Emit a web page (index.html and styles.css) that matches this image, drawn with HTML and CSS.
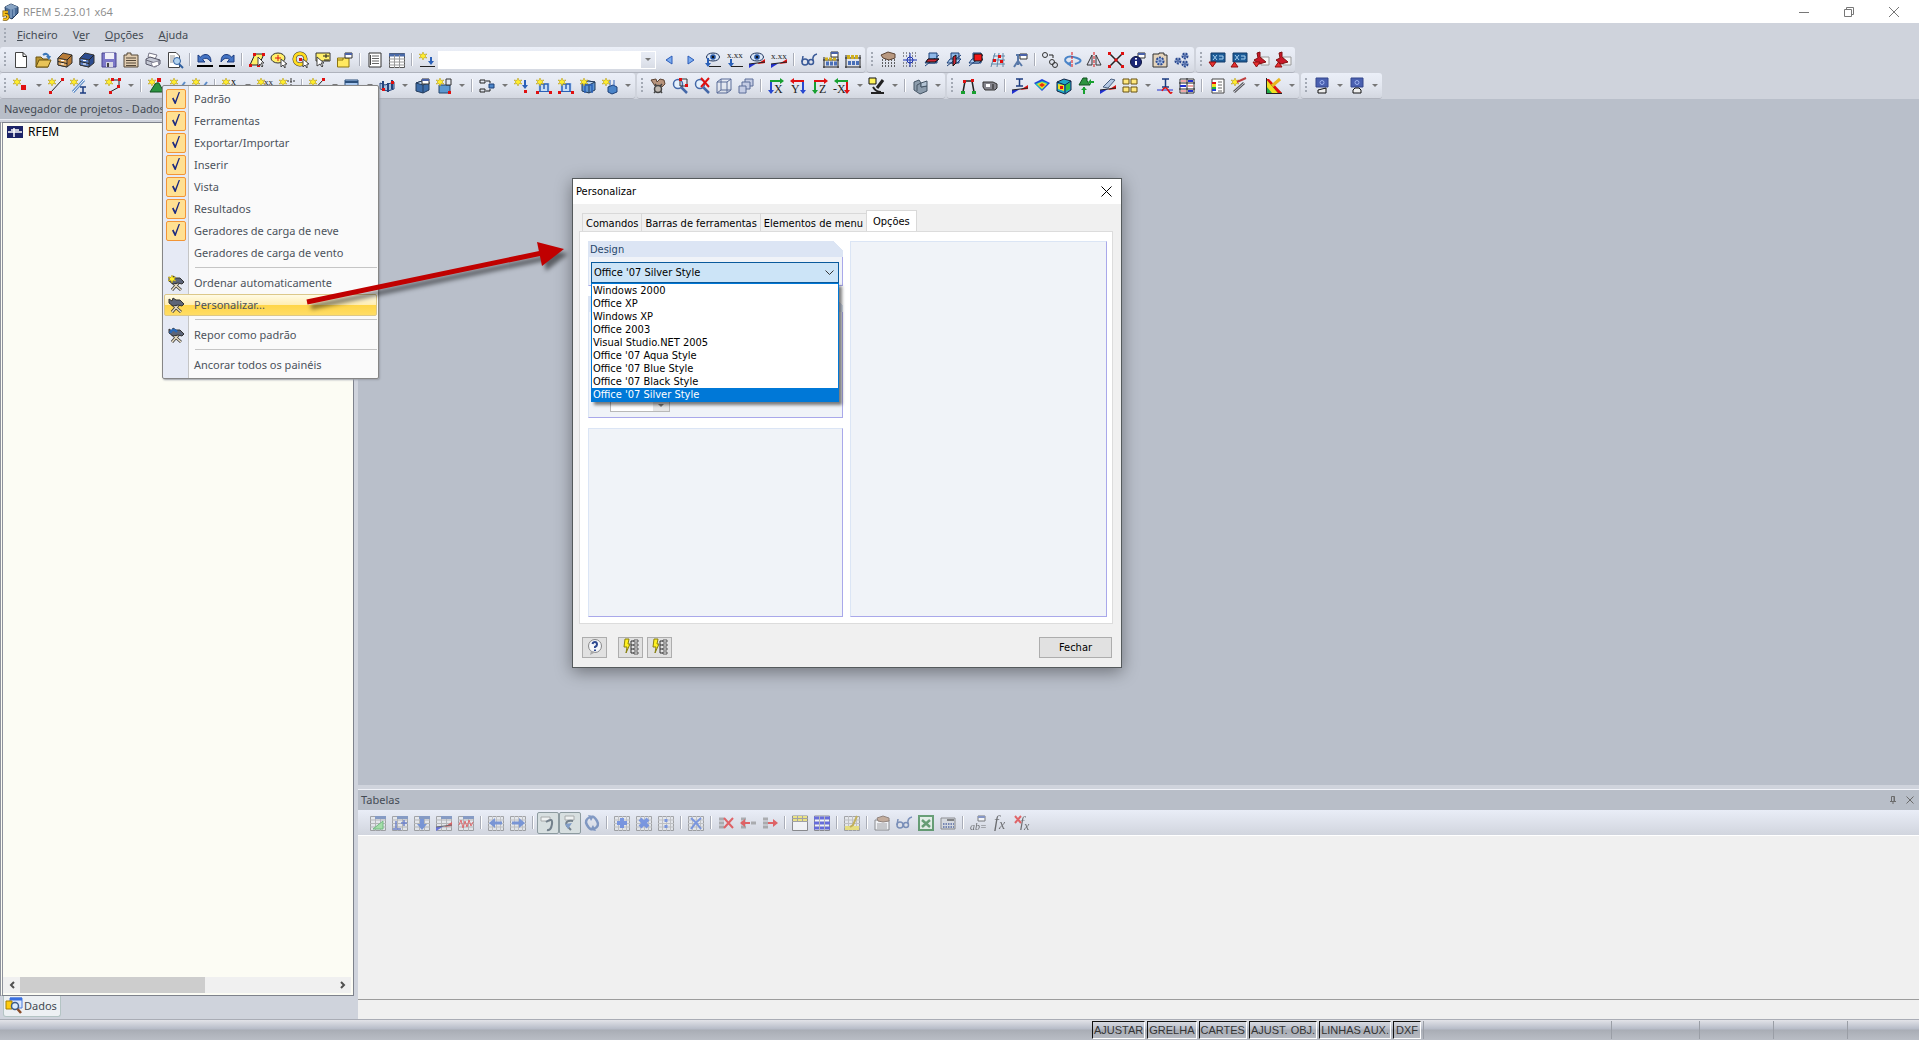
FILE: index.html
```html
<!DOCTYPE html>
<html lang="pt">
<head>
    <meta charset="UTF-8">
    <meta name="viewport" content="width=device-width, initial-scale=1.0">
    <title>RFEM 5.23.01 x64</title>
    <link rel="stylesheet" href="styles.css">
</head>
<body>
    <header class="titlebar">
        <span class="logo" data-icon="logo"></span>
        <h1>RFEM 5.23.01 x64</h1>
        <button class="win_btn" aria-label="Minimizar"><svg viewBox="0 0 10 10"><path d="M0 5.5H10"/></svg></button>
        <button class="win_btn" aria-label="Restaurar"><svg viewBox="0 0 10 10"><path d="M.5 2.500H7.500V9.500H.5ZM2.500 2.500V.5H9.500V7.500H7.500"/></svg></button>
        <button class="win_btn" aria-label="Fechar janela"><svg viewBox="0 0 10 10"><path d="M0 0L10 10M10 0L0 10"/></svg></button>
    </header>
    <nav class="menubar">
        <i class="grip"></i>
        <a href="#"><u>F</u>icheiro</a>
        <a href="#">V<u>e</u>r</a>
        <a href="#"><u>O</u>pções</a>
        <a href="#"><u>A</u>juda</a>
    </nav>
    <div class="bars" id="row1"></div>
    <div class="bars" id="row2"></div>

    <main class="main">
        <aside class="nav">
            <h2 class="caption">Navegador de projetos - Dados</h2>
            <div class="tree">
                <ul>
                    <li><span data-icon="root"></span>RFEM</li>
                </ul>
                <div class="scroll">
                    <button aria-label="Esquerda"><svg viewBox="0 0 8 8"><path d="M6 1L3 4L6 7"/></svg></button>
                    <div class="track"><div class="thumb"></div></div>
                    <button aria-label="Direita"><svg viewBox="0 0 8 8"><path d="M2 1L5 4L2 7"/></svg></button>
                </div>
            </div>
            <div class="nav_tabs">
                <button class="nav_tab"><span data-icon="data"></span>Dados</button>
            </div>
        </aside>
        <div class="work">
            <div class="canvas"></div>
            <section class="tables">
                <div class="tables_head">
                    <h2 class="caption">Tabelas</h2>
                    <button aria-label="Fixar"><svg viewBox="0 0 8 8"><path d="M1 5.500H7M2.500 5V.5H5.500V5M5 .5V5M4 6V8"/></svg></button>
                    <button aria-label="Fechar painel"><svg viewBox="0 0 8 8"><path d="M.5 .5L7.500 7.500M7.500 .5L.5 7.500"/></svg></button>
                </div>
                <div class="tables_bar" id="row3"></div>
                <div class="tables_body"></div>
                <div class="tables_foot"></div>
            </section>
        </div>
    </main>

    <footer class="status">
        <button>AJUSTAR</button>
        <button>GRELHA</button>
        <button>CARTES</button>
        <button>AJUST. OBJ.</button>
        <button>LINHAS AUX.</button>
        <button>DXF</button>
        <i class="cell cell_wide"></i>
        <i class="cell cell_mid"></i>
        <i class="cell"></i>
        <i class="cell"></i>
        <i class="cell"></i>
    </footer>

    <div class="context">
        <label><input type="checkbox" checked>Padrão</label>
        <label><input type="checkbox" checked>Ferramentas</label>
        <label><input type="checkbox" checked>Exportar/Importar</label>
        <label><input type="checkbox" checked>Inserir</label>
        <label><input type="checkbox" checked>Vista</label>
        <label><input type="checkbox" checked>Resultados</label>
        <label><input type="checkbox" checked>Geradores de carga de neve</label>
        <label><input type="checkbox">Geradores de carga de vento</label>
        <hr>
        <button><span data-icon="toolsNew"></span>Ordenar automaticamente</button>
        <button class="active"><span data-icon="tools"></span>Personalizar...</button>
        <hr>
        <button><span data-icon="toolsReset"></span>Repor como padrão</button>
        <hr>
        <button><span></span>Ancorar todos os painéis</button>
    </div>

    <div class="dialog" role="dialog" aria-labelledby="dlg_title">
        <div class="dialog_title">
            <h2 id="dlg_title">Personalizar</h2>
            <button aria-label="Fechar diálogo"><svg viewBox="0 0 11 11"><path d="M.5 .5L10.500 10.500M10.500 .5L.5 10.500"/></svg></button>
        </div>
        <div class="tabs">
            <button>Comandos</button>
            <button>Barras de ferramentas</button>
            <button>Elementos de menu</button>
            <button class="current">Opções</button>
        </div>
        <div class="page">
            <div class="column">
                <div class="group group_design">
                    <label class="group_head" for="design">Design</label>
                    <div class="combo">
                        <select id="design">
                            <option>Office '07 Silver Style</option>
                        </select>
                        <svg class="chevron" viewBox="0 0 9 6"><path d="M.5 .5L4.500 4.500L8.500 .5"/></svg>
                        <select class="list" size="9" aria-label="Estilos">
                            <option>Windows 2000</option>
                            <option>Office XP</option>
                            <option>Windows XP</option>
                            <option>Office 2003</option>
                            <option>Visual Studio.NET 2005</option>
                            <option>Office '07 Aqua Style</option>
                            <option>Office '07 Blue Style</option>
                            <option>Office '07 Black Style</option>
                            <option selected>Office '07 Silver Style</option>
                        </select>
                    </div>
                </div>
                <div class="group group_size">
                    <div class="group_head"></div>
                    <div class="spin">
                        <input type="text" aria-label="Tamanho">
                        <button aria-label="Diminuir"></button>
                    </div>
                </div>
                <div class="group group_fill"></div>
            </div>
            <div class="group"></div>
        </div>
        <div class="dialog_foot">
            <button class="tool" aria-label="Ajuda" data-icon="help"></button>
            <button class="tool tool_gap" aria-label="Expandir" data-icon="flash"></button>
            <button class="tool" aria-label="Recolher" data-icon="flash"></button>
            <button class="close">Fechar</button>
        </div>
    </div>

    <svg class="arrow" viewBox="0 0 272 76">
        <path d="M7 62L242 13" stroke="#c00000" stroke-width="5"/>
        <path d="M237 2L264 9L242 26Z" fill="#c00000"/>
    </svg>
    <script src="script.js"></script>
</body>
</html>
```

FILE: styles.css
```css
*{
    box-sizing: border-box;
    margin: 0;
    padding: 0;
}
body{
    position: relative;
    display: flex;
    flex-direction: column;
    height: 100vh;
    overflow: hidden;
    background-color: #cfd3dc;
    font: 11px/16px "Noto Sans", sans-serif;
    color: #444b54;
}
button{
    border: none;
    background: none;
    color: inherit;
    font: inherit;
}
svg{
    display: block;
    flex: none;
    overflow: visible;
    fill: none;
}
h1, h2{
    font-size: inherit;
    font-weight: normal;
}
ul{
    list-style: none;
}

/* title and menu */
.titlebar{
    display: flex;
    align-items: center;
    height: 23px;
    padding: 0 3px 0 2px;
    background-color: white;
}
.titlebar h1{
    flex: 1;
    padding-left: 5px;
    font: 11px/16px "Open Sans", sans-serif;
    color: #8c8c8c;
}
.win_btn{
    display: grid;
    place-items: center;
    width: 45px;
    height: 20px;
}
.win_btn svg{
    width: 10px;
    height: 10px;
    stroke: #777;
}
.menubar{
    display: flex;
    align-items: center;
    gap: 15px;
    height: 24px;
}
.menubar .grip{
    margin-right: -8px;
}
.menubar a{
    color: inherit;
    text-decoration: none;
}

/* toolbars */
.bars{
    display: flex;
    gap: 2px;
    height: 26px;
}
.bar{
    display: flex;
    align-items: center;
    height: 26px;
    padding-right: 1px;
    border-bottom: 1px solid #afb3bd;
    border-radius: 3px;
    background: linear-gradient(#ebeff8, #e3e7f0 50%, #d3d7e0);
}
.grip{
    width: 10px;
    height: 15px;
    flex: none;
    background: repeating-linear-gradient(#a3a9b4 0 2px, transparent 2px 4px) 4px 0/2px 15px no-repeat;
}
.sep{
    width: 8px;
    height: 13px;
    flex: none;
    background: linear-gradient(90deg, #a9adb8 1px, white 1px) 3px 0/2px 13px no-repeat;
}
.icon{
    display: grid;
    place-items: center;
    flex: none;
    width: 22px;
    height: 22px;
}
.icon svg, [data-icon] svg{
    width: 16px;
    height: 16px;
}
.drop{
    display: grid;
    place-items: center;
    flex: none;
    width: 13px;
    height: 22px;
}
.drop::before, .combo_btn::before, .spin button::before{
    content: "";
    border: 3px solid transparent;
    border-top-color: #777;
    border-bottom: none;
}
.finder{
    display: flex;
    width: 218px;
    height: 18px;
    margin-right: 2px;
    border: 1px solid white;
}
.finder input{
    flex: 1;
    min-width: 0;
    border: none;
    background-color: white;
}
.combo_btn{
    display: grid;
    place-items: center;
    width: 14px;
}

/* navigator */
.main{
    display: flex;
    flex: 1;
    min-height: 0;
}
.nav{
    display: flex;
    flex-direction: column;
    width: 358px;
    padding-right: 4px;
}
.caption{
    flex: 1;
    font: 11px/20px "Noto Sans", sans-serif;
}
.nav .caption{
    flex: none;
    height: 21px;
    padding-left: 4px;
    border-bottom: 1px solid #e8ebf2;
    background-color: #b8bec8;
}
.tree{
    display: flex;
    flex: 1;
    flex-direction: column;
    justify-content: space-between;
    margin-top: 2px;
    padding: 1px 2px 2px 0;
    border: 1px solid #7e828c;
    border-left: 3px double #8e929c;
    background-color: #fcfcf4;
}
.tree li{
    display: flex;
    align-items: center;
    gap: 5px;
    padding: 0 4px;
    font-size: 12px;
    color: black;
}
.scroll{
    display: flex;
    height: 16px;
    background-color: #f0f0f0;
}
.scroll button{
    display: grid;
    place-items: center;
    width: 17px;
}
.scroll svg{
    width: 8px;
    height: 8px;
    stroke: #505050;
    stroke-width: 2;
}
.track{
    flex: 1;
}
.thumb{
    width: 59%;
    height: 100%;
    background-color: #cdcdcd;
}
.nav_tabs{
    height: 23px;
    padding-left: 3px;
}
.nav_tab{
    display: flex;
    align-items: center;
    gap: 2px;
    height: 21px;
    padding: 0 3px 0 2px;
    border: 1px solid #b4c4c4;
    border-top: none;
    border-radius: 0 0 3px 3px;
    background-color: #edf0f3;
}

/* work area and tables */
.work{
    display: flex;
    flex: 1;
    flex-direction: column;
    min-width: 0;
}
.canvas{
    flex: 1;
    background-color: #b9bfca;
}
.tables{
    display: flex;
    flex-direction: column;
    height: 230px;
    margin-top: 4px;
    border-top: 1px solid #f0f2f8;
}
.tables_head{
    display: flex;
    align-items: center;
    gap: 1px;
    height: 20px;
    padding: 0 1px 0 3px;
    background-color: #b8bec8;
}
.tables_head button{
    display: grid;
    place-items: center;
    width: 16px;
    height: 16px;
}
.tables_head svg{
    width: 8px;
    height: 8px;
    stroke: #6c6c6c;
}
.tables_bar{
    display: flex;
    align-items: center;
    height: 25px;
    padding-left: 9px;
    background: linear-gradient(#e9edf7, #d1d5de);
}
.tables_bar svg{
    opacity: .6;
}
.icon.on{
    border: 1px solid #8d9ba0;
    border-radius: 2px;
    background-color: #d7dfe0;
}
.tables_body{
    flex: 1;
    border-top: 1px solid white;
    border-bottom: 1px solid #9c9c9c;
    background-color: #f0f0f0;
}
.tables_foot{
    height: 19px;
    background-color: #f0f0f0;
}

/* status bar */
.status{
    display: flex;
    justify-content: flex-end;
    gap: 2px;
    height: 21px;
    padding: 1px 0;
    border-top: 1px solid #a9acb5;
    background: linear-gradient(#e2e3e8, #b6bbc8 9px, #a9adb5 10px, #b9bdc5);
}
.status button{
    min-width: 28px;
    padding: 0 1px;
    border: 1px solid;
    border-color: #111 white white #111;
    font: 11px/16px "Liberation Sans", sans-serif;
    color: #333;
}
.cell{
    width: 72px;
    border-left: 1px solid #9a9ea6;
}
.cell_mid{
    width: 86px;
}
.cell_wide{
    width: 186px;
}

/* menu of the toolbars */
.context{
    position: absolute;
    left: 162px;
    top: 85px;
    width: 217px;
    padding: 2px 1px;
    border: 1px solid #868686;
    border-radius: 2px;
    background: linear-gradient(90deg, #e6eaf5 25px, #c5c5c5 25px 26px, #fafafa 26px);
    box-shadow: 1px 1px 2px #9a9ea6;
    color: #4c535c;
}
.context label, .context button{
    display: grid;
    grid-template-columns: 20px 1fr;
    align-items: center;
    gap: 8px;
    width: 100%;
    height: 22px;
    padding-left: 2px;
    text-align: left;
}
.context input{
    appearance: none;
    width: 20px;
    height: 20px;
}
.context input:checked{
    border: 1px solid #f29536;
    border-radius: 2px;
    background-color: #ffe092;
}
.context input:checked::before{
    content: "";
    display: block;
    width: 8px;
    height: 12px;
    margin: 2px 5px;
    background-color: #1c2a80;
    clip-path: polygon(0 54%, 18% 46%, 40% 74%, 84% 0, 100% 0, 46% 100%, 34% 100%);
}
.context hr{
    height: 8px;
    margin-left: 31px;
    border: none;
    background: linear-gradient(#c5c5c5, #c5c5c5) 0 3px/100% 1px no-repeat;
}
.context [data-icon]{
    padding-left: 2px;
}
.context .active{
    border: 1px solid #dcc88a;
    border-radius: 2px;
    padding-left: 1px;
    background: linear-gradient(#fffbe6, #ffeeb4 48%, #ffd548 50%, #ffdd66);
}

/* dialog */
.dialog{
    position: absolute;
    left: 572px;
    top: 178px;
    display: flex;
    flex-direction: column;
    width: 550px;
    height: 490px;
    border: 1px solid #555a5c;
    background-color: #f0f0f0;
    box-shadow: 0 4px 16px rgba(0, 0, 0, .4);
    font: 11px/13px "DejaVu Sans Condensed", "Liberation Sans", sans-serif;
    color: black;
}
.dialog_title{
    display: flex;
    justify-content: space-between;
    align-items: center;
    height: 25px;
    padding: 0 9px 0 3px;
    background-color: white;
}
.dialog_title svg{
    width: 11px;
    height: 11px;
    stroke: black;
}
.tabs{
    display: flex;
    align-items: flex-end;
    height: 27px;
    padding-left: 9px;
}
.tabs button{
    height: 18px;
    padding: 1px 3px 0;
    border: 1px solid #d9d9d9;
    border-right: none;
    border-bottom: none;
}
.tabs .current{
    height: 21px;
    padding: 0 6px;
    border-right: 1px solid #d9d9d9;
    background-color: white;
    box-shadow: 0 1px white;
}
.page{
    display: grid;
    grid-template-columns: 255px 1fr;
    gap: 7px;
    flex: 1;
    margin: 0 8px 0 6px;
    padding: 9px 5px 6px 8px;
    border: 1px solid #dcdcdc;
    background-color: white;
}
.column{
    display: flex;
    flex-direction: column;
    gap: 10px;
}
.group{
    border: 1px solid #dbe5f5;
    border-right-color: #a9a8ea;
    border-bottom-color: #a9a8ea;
    background-color: #f0f3f8;
}
.group_head{
    display: block;
    height: 16px;
    margin: -1px;
    padding: 2px;
    background: linear-gradient(225deg, white 7px, #dce5f4 7px);
    color: #27476b;
}
.group_design{
    height: 45px;
}
.group_size{
    height: 122px;
}
.group_fill{
    flex: 1;
}
.combo{
    position: relative;
    margin: 6px 3px 0 2px;
}
.combo select{
    appearance: none;
    display: block;
    width: 100%;
    border-radius: 0;
    outline: none;
    font: inherit;
    color: black;
}
#design{
    height: 21px;
    padding-left: 2px;
    border: 1px solid #0a5a9c;
    background-color: #cce4f7;
}
.chevron{
    position: absolute;
    right: 5px;
    top: 8px;
    width: 9px;
    height: 6px;
    stroke: #333;
}
.combo .list{
    position: absolute;
    top: 21px;
    left: 0;
    z-index: 1;
    height: 119px;
    overflow: hidden;
    border: 1px solid #0078d7;
    background-color: white;
    box-shadow: 3px 3px 3px rgba(0, 0, 0, .5);
}
.list option{
    min-height: 13px;
    height: 13px;
    padding: 0 1px;
    line-height: 13px;
}
.list option:checked{
    background: linear-gradient(#0078d7, #0078d7);
    color: white;
    -webkit-text-fill-color: white;
}
.spin{
    display: flex;
    width: 60px;
    height: 20px;
    margin: 81px 0 0 21px;
    border: 1px solid #b9b9b9;
}
.spin input{
    width: 42px;
    border: none;
    background-color: white;
}
.spin button{
    display: grid;
    place-items: center;
    flex: 1;
    padding-top: 6px;
    background-color: #e6e6e6;
}
.dialog_foot{
    display: flex;
    align-items: center;
    gap: 4px;
    height: 43px;
    padding: 3px 9px 0;
}
.dialog_foot button{
    height: 21px;
    border: 1px solid #adadad;
    background-color: #e1e1e1;
}
.tool{
    display: grid;
    place-items: center;
    width: 25px;
}
.tool_gap{
    margin-left: 7px;
}
.dialog_foot .close{
    width: 73px;
    margin-left: auto;
}

/* pointer from the menu to the dialog */
.arrow{
    position: absolute;
    left: 300px;
    top: 240px;
    width: 272px;
    height: 76px;
    pointer-events: none;
    filter: drop-shadow(4px 5px 2px rgba(0, 0, 0, .5));
}
```

FILE: script.js
```js
//pieces shared by many icons
const star = '<path d="M4 0L5 2.500L8 2L6 4L8 6L5 5.500L4 8L3 5.500L0 6L2 4L0 2L3 2.500Z" fill="#ffee2a" stroke="#b8a020" stroke-width=".6"/>'
const dot = (x, y) => `<rect x="${x}" y="${y}" width="3" height="3" fill="#e01010"/>`
const line = (d, color = '#222', width = 1) => `<path d="${d}" stroke="${color}" stroke-width="${width}"/>`
const fill = (d, color, edge = 'none') => `<path d="${d}" fill="${color}" stroke="${edge}"/>`
const text = (x, y, value, size = 10, color = '#222') => `<text x="${x}" y="${y}" font-family="Liberation Serif, serif" font-size="${size}" fill="${color}">${value}</text>`
const win = (x, y) => `<path d="M${x} ${y}h7v5h-7z" fill="#fff" stroke="#333"/><path d="M${x} ${y + 1}h7" stroke="#4a62a8" stroke-width="2"/>`
const wedge = fill('M0 16V12L8 11Z', '#2030d0') + fill('M16 7V11L8 12Z', '#e01010') + line('M0 12L16 10')
const grid = fill('M.5 1.500H15.500V15.500H.5Z', '#e8eaec', '#777') + line('M0 5H16M0 8.500H16M0 12H16M5.500 1V16M10.500 1V16', '#999') + fill('M5 1H16V4H5Z', '#4a6aa8')
const plain = fill('M.5 1.500H15.500V15.500H.5Z', '#e8eaec', '#777') + line('M0 5H16M0 8.500H16M0 12H16M4.500 1V16M8.500 1V16M12.500 1V16', '#aaa')
const cube = (c) => fill('M2 5L8 3L15 4V12L9 15L2 13Z', c, '#223a5a') + fill('M2 5L8 3L15 4L9 7Z', '#bcd4f0', '#223a5a') + line('M9 7V15', '#223a5a')
const planes = (r) => fill('M5 1H13V11H5Z', '#8fb8e8', '#1c4078') + fill('M4 7H15L11 11H1Z', '#a8c8f0', '#1c4078') + line('M1 14L15 3', '#1c4078') + r
const glasses = '<g stroke="#3a5a98" stroke-width="1.500"><circle cx="4" cy="10" r="3"/><circle cx="10" cy="10" r="2.500"/><path d="M1 10L2 4M7 10H8M12 9Q11 3 16 2"/></g>'
const hammer = line('M4 7L13 15M12 6L4 15', '#333', 3) + line('M4 7L13 15M12 6L4 15', '#e8dcc0', 1.500) + fill('M1 2L4 4L5 1L8 3L12 3L16 7L14 9L10 8L5 9L1 6Z', '#5c6478', '#333')
const disk = fill('M1 1H15V15H1Z', '#7c78c8', '#4a4690') + fill('M4 1H13V7H4Z', '#f0f0f8') + fill('M5 10H12V15H5Z', '#d8d8e4') + fill('M6 11H8V15H6Z', '#444')
const lens = '<circle cx="6" cy="6" r="4.500" fill="#e4f0fc" stroke="#4468a8" stroke-width="1.500"/><path d="M9.500 9.500L15 15" stroke="#4468a8" stroke-width="2.500"/>'
const eye = '<ellipse cx="8" cy="5" rx="6.500" ry="4" fill="#dce8f8" stroke="#1c3058"/><circle cx="8" cy="5" r="2.800" fill="#2858a8"/><circle cx="8" cy="5" r="1.200"  fill="#111"/>'
const cabinet = (c, d) => fill('M1 6L6 1L15 3V11L10 15L1 13Z', c, '#333') + fill('M1 6L10 8V15L1 13Z', d, '#333') + line('M1 9.500L10 11.500M10 8L15 3') + line('M4 8.500H7M4 12H7', '#fff')
const loads = fill('M2 5H14V13H2Z', '#c8dcf4') + line('M4 14V6H12V14M8 6V11', '#2a60b8', 1.500) + line('M1 13.500H15', '#2a60b8') + dot(0, 13) + dot(13, 13)
const axes = (a, b, t, x) => line('M3 15V3H13', a, 2) + line('M3 15V4', b, 2) + fill('M12 0L16 3L12 6Z', a) + fill('M0 12H6L3 16Z', b) + text(x, 15, t, 12)
const backAxes = (a, b, t, x) => line('M13 15V3H4', a, 2) + line('M13 15V4', b, 2) + fill('M4 0L0 3L4 6Z', a) + fill('M10 12H16L13 16Z', b) + text(x, 15, t, 12)
const gear = (x, y, r) => `<circle cx="${x}" cy="${y}" r="${r}" fill="#a8c0e8" stroke="#2c4a90" stroke-width="2" stroke-dasharray="2 1"/><circle cx="${x}" cy="${y}" r="1" fill="#fff" stroke="#2c4a90"/>`
const monitor = fill('M2 1H16V10H2Z', '#1c5c98', '#123a68') + line('M4 3L8 8M8 3L4 8M10 4H14V7H10', '#a8d0f0')
const person = fill('M8 5H16V13H8Z', '#f4f4f4', '#999') + fill('M4 1L7 0V5L13 10L6 12L1 8L5 6Z', '#c81828', '#801010')
const screen = fill('M2 0H14V9H2Z', '#4a60b0', '#34478c') + '<circle cx="8" cy="4.500" r="2" stroke="#a0b4f0"/>'
const rows = line('M1 4H6M1 8H6M1 12H6', '#888', 3)

const icons = {
    logo: fill('M3 3L9 0L16 3V9L10 15L4 12Z', '#4a6c98', '#223a5a') + fill('M3 3L9 0L16 3L9 6Z', '#88a4c4') + line('M9 6V14M12 5V12', '#a0bcdc') + '<path d="M6 8H2V11Q6 10 6 13T1 15" stroke="#7c5800" stroke-width="3"/><path d="M6 8H2V11Q6 10 6 13T1 15" stroke="#ffc820" stroke-width="1.500"/>',
    root: fill('M0 2H16V14H0Z', '#1c2468') + line('M1 8H15M7 4V13M4 6L12 6', '#fff', 1.500),
    data: fill('M4 0H16V10H4Z', '#dce8fc', '#4a7ce0') + line('M4 1H16', '#3a70e0', 3) + fill('M0 3H6V11H0Z', '#ffcc10', '#a88000') + '<circle cx="9" cy="8" r="3.500" fill="#dcecfc" stroke="#3c5c88" stroke-width="1.500"/><path d="M11.500 11L15 15" stroke="#8a4c28" stroke-width="2.500"/>',
    newFile: fill('M2.500 .5H10L13.500 4V15.500H2.500Z', '#fff', '#444') + line('M10 .5V4.500H13.500'),
    open: fill('M1 5H6L8 7H13V15H1Z', '#b89430', '#6c5410') + fill('M1 15L4 8H16L13 15Z', '#e8c458', '#6c5410') + line('M8 3Q12 0 14 5', '#3c78b8', 2) + fill('M11 4H16L14 8Z', '#3c78b8'),
    cabinet: cabinet('#b87c38', '#e0a860'),
    cabinetBlue: cabinet('#2c4c90', '#5c80c4'),
    save: disk,
    report: fill('M1 3H4V1H8V3H15V15H1Z', '#e0ccb0', '#554838') + line('M3 6H13M3 8.500H13M3 11H13M3 13.500H13', '#554838'),
    print: fill('M4 1L12 3L10 7L3 5Z', '#fff', '#778') + fill('M1 7L5 5L15 8V12L10 15L1 12Z', '#c4c8d4', '#556') + line('M1 8L10 11L15 8', '#667') + fill('M6 11L13 9L14 13L8 15Z', '#fff', '#889'),
    preview: fill('M1.500 .5H9L12.500 4V15.500H1.500Z', '#fff', '#444') + line('M3 4H8M3 6H8M3 8H6M3 10H6', '#999') + '<circle cx="10" cy="9" r="3.500" fill="#b4d4f0" stroke="#3060a0"/><path d="M12 12L16 16" stroke="#3060a0" stroke-width="2"/>',
    undo: fill('M1 3V10H8L5.500 7.500Q10 4 14 10Q14 2 8 2.500Q5 3 3.500 5Z', '#4474c4', '#1c3c80') + line('M0 14H16', '#000', 2),
    redo: '<g transform="translate(16 0) scale(-1 1)">' + fill('M1 3V10H8L5.500 7.500Q10 4 14 10Q14 2 8 2.500Q5 3 3.500 5Z', '#4474c4', '#1c3c80') + '</g>' + line('M0 14H16', '#000', 2),
    selPlane: fill('M6 2H15L10 13H1Z', '#fff06a', '#222') + dot(4, 1) + dot(13, 1) + dot(0, 12) + dot(8, 12) + fill('M9 5V14L11 12L13 15L14 14L12 11H15Z', '#fff', '#444'),
    selEllipse: '<ellipse cx="7" cy="6" rx="7" ry="5" fill="#fff06a" stroke="#333"/>' + line('M7 3V9M4 6H10', '#e01010') + fill('M10 7V15L12 13L14 16L14 12H16Z', '#fff', '#444'),
    selRing: '<circle cx="7" cy="7" r="5.500" stroke="#333" stroke-width="4"/><circle cx="7" cy="7" r="5.500" stroke="#ffdc20" stroke-width="3"/>' + dot(6, 6) + fill('M10 7V15L12 13L14 16L14 12H16Z', '#fff', '#444'),
    selPlus: fill('M1 1H15V9H1Z', '#fff06a', '#333') + line('M8 4H14M11 2V6M9 8H14') + fill('M2 5V14L5 12L7 15L8 14L6 11H9Z', '#fff', '#444'),
    selWindow: fill('M.5 6H12V15H.5Z', '#ffe860', '#8c7410') + line('M0 8H6V6', '#8c7410') + win(8, 1),
    list: fill('M2 1H14V15H2Z', '#fff', '#333') + line('M5 4H12M5 6.500H12M5 9H12M5 11.500H12', '#666') + line('M3.500 3V13', '#444', 1),
    table: fill('M.5 1.500H15.500V15.500H.5Z', '#fff', '#555') + line('M0 3H16', '#4a6aa8', 3) + line('M0 7H16M0 10H16M0 13H16M5.500 3V16M10.500 3V16', '#999'),
    loadNew: star + line('M12 5V10', '#2a60b8', 2) + fill('M9 9H15L12 13Z', '#2a60b8') + line('M1 14.500H16'),
    prev: fill('M11 4V12L5 8Z', '#7cacf0', '#2c5cb8'),
    next: fill('M5 4V12L11 8Z', '#7cacf0', '#2c5cb8'),
    eyeLoad: eye + line('M3 6V13', '#2a60b8', 2) + fill('M0 11H6L3 15Z', '#2a60b8') + line('M4 14.500H16'),
    xLoad: text(0, 6, 'x.xx', 9) + line('M4 7V13', '#2a60b8', 2) + fill('M1 11H7L4 15Z', '#2a60b8') + line('M4 14.500H16'),
    eyeRes: eye + wedge,
    xRes: text(0, 7, 'x.xx', 9) + wedge,
    glasses: glasses,
    calcWin: line('M1 5V16M15 5V16M0 8H16M0 15H16', '#222') + '<path d="M2 7H14" stroke="#d0b020" stroke-width="3" stroke-dasharray="3 1"/><path d="M3 11.500H14" stroke="#4a70b8" stroke-width="4" stroke-dasharray="3 1"/>' + win(8, 0),
    calc: line('M1 3V16M15 3V16M0 6H16M0 15H16', '#222') + '<path d="M2 5H14" stroke="#d0b020" stroke-width="4" stroke-dasharray="3 1"/><path d="M3 11H14" stroke="#4a70b8" stroke-width="4" stroke-dasharray="3 1"/>',
    gridHand: '<path d="M2 8H16M2 11H16M2 14H16" stroke="#333" stroke-width="1.500" stroke-dasharray="1 2"/>' + fill('M1 3L8 0L15 2V6L9 8L3 6Z', '#b89880', '#5c4434'),
    gridSnap: '<path d="M1 1H16M1 4H16M1 11H16M1 14H16" stroke="#333" stroke-dasharray="1 2"/><circle cx="8" cy="8" r="3" stroke="#1830b0"/>' + line('M8 1V15M1 8H15', '#1830b0'),
    plane1: planes(fill('M4 7H15L11 10H2Z', '#d02838', '#111') + fill('M6 2H12V6H6Z', '#8fb8e8')),
    plane2: planes(fill('M7 5L10 3V11L7 14Z', '#d02838', '#111')),
    plane3: planes(fill('M6 2H14V9H6Z', '#f01818', '#111')),
    gridLines: line('M5 1L1 15M9 1L7 15M13 1L13 15M3 4H15M2 8H15M1 12H15', '#6088a8') + dot(3, 7) + dot(8, 3) + dot(10, 8),
    cutWin: line('M4 3H8M6 3V13M2 15L6 9L10 14', '#5878a8', 2) + win(8, 2),
    copy: '<circle cx="3" cy="3" r="2.500" stroke="#333"/><circle cx="10" cy="10" r="2.500" stroke="#333"/><circle cx="13" cy="13" r="2.500" stroke="#333"/>' + line('M7 3H11V6'),
    rotate: '<path d="M5 12Q-1 9 2 6T13 6T11 12" stroke="#4a84c8" stroke-width="2"/>' + fill('M7 9V15L3 12Z', '#4a84c8') + '<path d="M8 0V16" stroke="#e01010" stroke-dasharray="3 1"/>',
    mirror: fill('M6 3V13H1Z', '#dde', '#333') + fill('M10 3V13H15Z', '#dde', '#333') + '<path d="M8 0V16" stroke="#e01010" stroke-dasharray="3 1"/>',
    cross: line('M2 2L14 14M14 2L2 14', '#222', 1.500) + dot(0, 0) + dot(13, 0) + dot(0, 13) + dot(13, 13) + dot(6.500, 6.500),
    info: win(8, 1) + '<circle cx="6" cy="10" r="5.500" fill="#1c2878" stroke="#0c1440"/><path d="M6 9V13M6 6V7.500" stroke="#fff" stroke-width="2"/>',
    gearDoc: fill('M1 2H7V1H12V3H15V15H1Z', '#e4d4bc', '#333') + gear(8, 9, 3.5),
    gears: gear(4, 9, 2.5) + gear(11, 4, 2.5) + gear(11, 12, 2.5),
    monDown1: monitor + fill('M0 10H7L3.500 15Z', '#e83030', '#901010'),
    monUp1: monitor + fill('M0 15H7L3.500 10Z', '#e83030', '#901010'),
    pplDown: person + fill('M0 10H7L3.500 15Z', '#e83030', '#901010'),
    pplUp: person + fill('M0 15H7L3.500 10Z', '#e83030', '#901010'),
    node: star + fill('M8 7H13V12H8Z', '#e01010'),
    lineNew: star + line('M3 14L14 2') + dot(1, 13) + dot(13, 0),
    memberNew: star + line('M3 14L14 2', '#5c8cc8', 3) + line('M3 14L14 2', '#fff') + line('M10 9H16M13 9V15M10 15H16', '#1c3c80', 1.500),
    polyNew: star + line('M7 2H14V9L5 14', '#222') + dot(6, 0) + dot(13, 0) + dot(12, 7) + dot(4, 13),
    support: star + fill('M9 0H13V4H9Z', '#e01010') + fill('M7 6Q11 3 12 7L16 14H2Z', '#2c9440', '#125020'),
    hinge: star + line('M9 12L15 4', '#5c8cc8', 2),
    xNew: star + text(9, 7, 'x', 10, '#000') + line('M3 12H15', '#3c6cb0', 2),
    xxNew: star + text(7, 7, 'xx', 9) + line('M3 12H15', '#3c6cb0'),
    dashNew: star + '<path d="M8 3H16M3 8H16M12 0V15" stroke="#333" stroke-dasharray="2 1"/>',
    surface: fill('M1 2H14V14H1Z', '#a8c8f0', '#2c507c') + line('M1 4H14', '#2c507c', 2),
    surfaces: fill('M1 5L6 7L15 4V11L9 13L1 11Z', '#a8c0e0', '#24447c') + line('M4 3V12M9 5V14M13 2V11', '#24447c', 2) + dot(3, 10) + dot(12, 3),
    solid: cube('#3c6ca8') + win(8, 1),
    solidNew: fill('M3 7H14V15H3Z', '#5c98d0', '#24446c') + star + fill('M10 1H15V7H10Z', '#e4e8f0', '#333') + dot(12, 13),
    connect: line('M1 2H6V5H1ZM1 11H6V14H1ZM7 3H11V5M7 13H11V11') + fill('M10 6H15V10H10Z', '#4a84c8', '#1c4078'),
    nodeLoad: star + line('M11 2V9', '#2a60b8', 2) + fill('M8 7H14L11 11Z', '#2a60b8') + dot(10, 12),
    memberLoad: loads + star,
    surfLoad: loads + star,
    solidLoad: cube('#5c94d0') + line('M5 15V7H12V15', '#2a60b8', 1.5) + star,
    freeLoad: fill('M6 9L11 7L15 9V14L10 16L6 14Z', '#4a84c8', '#1c4078') + line('M8 2V8M12 2V8', '#2a60b8') + star,
    handTools: fill('M1 2L6 1L7 4L10 1L14 2L15 6L12 9L5 8Z', '#b8947c', '#5c4434') + line('M5 6L12 15M12 6L4 15', '#444', 1.5) + '<circle cx="8" cy="11" r="3.500" fill="#c0b8b0" stroke="#444" stroke-width="1.500"/>',
    zoomWin: lens + line('M8 1H15V8H8Z', '#333') + dot(7, 0) + dot(13, 6),
    zoomOut: lens + line('M7 0L15 9M15 0L7 9', '#e01010', 2),
    wire: line('M1 4H11V15H1ZM5 1H15V12M1 4L5 1M11 4L15 1M11 15L15 12M5 1V12H15M1 15L5 12', '#5a6c98'),
    boxes: fill('M7 1H15V8H7Z', '#c4cce4', '#5a6c98') + fill('M4 4H12V11H4Z', '#c4cce4', '#5a6c98') + fill('M1 8H8V15H1Z', '#c4cce4', '#5a6c98'),
    axX: axes('#18a030', '#2848d0', 'X', 6),
    axY: backAxes('#e01010', '#2848d0', 'Y', 1),
    axZ: axes('#e01010', '#18a030', 'Z', 7),
    axMX: backAxes('#18a030', '#e01010', '-X', -1),
    scope: fill('M0 0H7V6H0Z', '#fff45a', '#111') + line('M8 10L14 2', '#222', 3) + line('M4 9Q7 14 12 14M2 15H15', '#222', 2),
    solids: fill('M2 4L7 2L9 5V9L15 8V13L8 16L2 12Z', '#8c9cac', '#445464') + fill('M9 5L15 3V8L9 9Z', '#b4c4d4', '#445464') + line('M5 7V13M5 7L9 5', '#445464'),
    frame: line('M3 14L5 3H12L14 14', '#222', 1.5) + dot(3, 2) + dot(11, 1) + '<path d="M1 13H5V16H1ZM12 13H16V16H12Z" fill="#18a030"/>',
    camera: fill('M1 4H11L15 6V10L13 12H3L1 9Z', '#84848c', '#333') + fill('M4 6H8V9H4Z', '#fff') + line('M11 6V11'),
    resMember: line('M4 1H11M7.500 1V8M4 8H11', '#1c3c80', 1.500) + wedge,
    resSurf: fill('M0 5L8 1L16 5L8 13Z', '#2040d8') + fill('M1 6L8 3L14 5L8 12Z', '#20c8b0') + fill('M3 6L8 4L13 6L8 11Z', '#f0e020') + fill('M5 7L8 5L11 7L8 9Z', '#e83010'),
    resSolid: fill('M1 4L8 1L15 3V12L9 16L1 13Z', '#20a8c8', '#124') + fill('M2 6L8 7V13L2 11Z', '#f0e020') + fill('M4 8H7V11H4Z', '#e01010') + fill('M10 7L14 5V11L10 13Z', '#30c040') + line('M9 7V15M1 4L9 7L15 3', '#124'),
    resSupp: fill('M5 0H9V3L12 7H1Z', '#2c9440', '#125020') + line('M6 9V16M11 4H16', '#18a030', 2) + fill('M3 12L6 9L9 12Z', '#18a030') + fill('M13 1V7L10 4Z', '#18a030'),
    section: fill('M3 9L11 1L15 2L8 10Z', '#b4c8e4', '#4a6080') + wedge,
    panels: fill('M1 1H7V6H1Z', '#ffe880', '#665010') + fill('M9 1H15V6H9Z', '#ffe880', '#665010') + fill('M1 9H7V14H1Z', '#ffe880', '#665010') + fill('M9 9H15V14H9Z', '#ffe880', '#665010'),
    wave: line('M5 1H12M8.500 1V9M5 9H12', '#1c3c80', 1.500) + line('M0 12H16', '#2030d0') + '<path d="M5 13Q8 7 11 12T15 14" stroke="#e01010" stroke-width="1.500"/>',
    waves: fill('M1 1H15V15H1Z', '#fff', '#333') + line('M0 5H16M0 11H16M8 0V16') + line('M1 8H7M9 3H14M9 13H14', '#2030d0', 2) + line('M2 3H7M9 8H14M2 13H7', '#e05050'),
    legend: fill('M3 1H15V15H3Z', '#fff', '#444') + line('M9 4H13M9 7H13M9 10H13M9 13H13', '#666') + fill('M3 4H7V6H3Z', '#e01010') + fill('M3 6H7V9H3Z', '#f0e020') + fill('M3 9H7V11H3Z', '#20b040') + fill('M3 11H7V13H3Z', '#2040d8'),
    brush: star + line('M3 14L13 5', '#555', 3) + line('M6 4L15 0', '#c04040', 2) + line('M3 14L13 5', '#ccd'),
    rainbow: fill('M0 1L16 15H0Z', '#20a848') + fill('M0 1L12 15H6L0 8Z', '#f0e020') + fill('M0 1H3L16 15H12Z', '#e01010') + line('M6 8L14 1', '#e8b820', 3) + line('M0 15.500H16M.5 0V16'),
    screenUp: screen + fill('M4 12L12 10V15H4Z', '#eee', '#111'),
    screenDown: screen + fill('M4 15V12L6 10H10L12 12V15Z', '#eee', '#111'),
    tEdit: grid + fill('M3 14L13 6V14Z', '#80e080', '#30a040'),
    tInsert: grid + line('M4 6V13M1 14H9M9 8H15M12 5V11', '#2848b8', 1.5),
    tDown: grid + line('M8 4V10', '#3864c8', 4) + fill('M3 9H13L8 15Z', '#3864c8'),
    tWedge: grid + wedge,
    tWave: grid + '<path d="M1 10L3 5L5 13L7 6L9 12L11 5L13 11L15 7" stroke="#e02020"/>',
    tLeft: plain + line('M5 8H14', '#3864c8', 3) + fill('M7 3V13L1 8Z', '#3864c8'),
    tRight: plain + line('M2 8H11', '#3864c8', 3) + fill('M9 3V13L15 8Z', '#3864c8'),
    tCurve1: fill('M1 2H10V6H1Z', '#fff', '#888') + '<path d="M6 7Q13 2 12 9T7 15" stroke="#345" stroke-width="2"/>',
    tCurve2: fill('M3 1H12V5H3Z', '#fff', '#888') + '<path d="M11 6Q2 5 5 11L9 15" stroke="#345" stroke-width="2"/>' + fill('M3 9L10 8L6 14Z', '#4a74b8'),
    tSync: '<path d="M6 2Q0 5 3 10T8 14M10 14Q16 11 13 6T8 2" stroke="#4468a8" stroke-width="2.500"/>' + fill('M4 0L10 1L7 6Z', '#4468a8') + fill('M12 16L6 15L9 10Z', '#4468a8'),
    tPlus: plain + line('M8 3V13M3 8H13', '#3864d8', 4),
    tTimes: plain + line('M4 4L12 12M12 4L4 12', '#3864d8', 4),
    tDiv: plain + line('M8 4V7M8 10V13', '#3864d8', 3),
    tCross: plain + line('M3 3Q9 8 13 14M13 3Q7 8 3 14', '#3864d8', 2),
    tDel: rows + line('M6 3L15 13M15 3L6 13', '#e01010', 2),
    tRowLeft: rows + line('M5 8H10', '#e01010', 2) + fill('M5 4V12L0 8Z', '#e01010') + line('M11 8H16', '#888', 3),
    tRowRight: rows + line('M6 8H13', '#e01010', 2) + fill('M11 4V12L16 8Z', '#e01010'),
    tYellow: fill('M.5 1H15.500V15.500H.5Z', '#fff', '#555') + fill('M1 1H15V6H1Z', '#f0e040') + line('M0 3.500H16M0 6.500H16M5.500 1V6M10.500 1V6', '#777'),
    tBlue: fill('M.5 1H15.500V15.500H.5Z', '#fff', '#555') + line('M0 3H16M0 8H16M0 13H16', '#1820d0', 3) + line('M5.500 1V16M10.500 1V16', '#999'),
    tPen: plain + fill('M1 11H15V15H1Z', '#f0e040') + line('M13 1L9 10L6 12', '#b09000', 2),
    tHand: fill('M1 5H15V15H1Z', '#fff', '#555') + line('M3 9H13M3 11H13M3 13H13', '#777') + fill('M3 3L9 1L15 3V6L9 7L4 6Z', '#b08868', '#5c4434'),
    excel: fill('M1 1H15V15H1Z', '#e4f4e4', '#187028') + line('M1 1H15V15H1Z', '#187028', 2) + line('M4 5L12 12M12 5L4 12', '#187028', 2.5),
    keypad: fill('M1 3H15V14H1Z', '#d0d4d8', '#555') + fill('M7 4H14V6H7Z', '#444') + '<path d="M3 9H14M3 12H14" stroke="#334c90" stroke-width="2" stroke-dasharray="1.500 1"/>',
    formula: win(8, 1) + text(0, 15, '<tspan font-style="italic">ab=</tspan>', 10),
    fx: text(2, 12, '<tspan font-style="italic">f</tspan>', 17) + text(7, 14, '<tspan font-style="italic">x</tspan>', 14),
    fxDel: text(6, 12, '<tspan font-style="italic">f</tspan>', 15) + text(10, 15, '<tspan font-style="italic">x</tspan>', 12) + line('M1 1L7 8M7 1L1 8', '#e01010', 2),
    tools: hammer,
    toolsNew: hammer + star,
    toolsReset: hammer + line('M2 6Q5 0 9 5', '#2868b8', 2.5),
    help: '<circle cx="8" cy="7" r="6.500" fill="#f4f6fa" stroke="#888"/>' + fill('M4 12L3 16L9 13Z', '#aaa') + '<path d="M5.500 5Q6 3 8 3T10 5.500Q10 7 8 8V9M8 10.500V12" stroke="#2c4890" stroke-width="2"/>',
    flash: fill('M2 0H6L5 5H7L3 14L4 8H1Z', '#fff020', '#888010') + line('M8 2V14M8 2H11M8 6H11M8 10H11M8 14H11', '#333') + '<path d="M11 1H15V3H11ZM11 5H15V7H11ZM11 9H15V11H11ZM11 13H15V15H11Z" fill="#fff" stroke="#333" stroke-width=".8"/>'
}

//'|' separator, 'v' arrow of the button before it, 'combo' load case box, '+' pressed button
const row1 = [
    'newFile open cabinet cabinetBlue save report print preview | undo redo | selPlane selEllipse selRing selPlus selWindow | list table | loadNew combo prev next eyeLoad xLoad eyeRes xRes | glasses calcWin calc',
    'gridHand gridSnap plane1 plane2 plane3 gridLines cutWin | copy rotate mirror cross info gearDoc gears',
    'monDown1 monUp1 pplDown pplUp'
]
const row2 = [
    'node v lineNew memberNew v polyNew v | support hinge hinge | xNew v xxNew dashNew | lineNew v surface v surfaces v solid solidNew v | connect v nodeLoad memberLoad surfLoad solidLoad freeLoad v',
    'handTools zoomWin zoomOut wire boxes | axX axY axZ axMX v scope v | solids v',
    'frame camera | resMember resSurf resSolid resSupp section panels v wave waves | legend brush v rainbow v',
    'screenUp v screenDown v'
]
const row3 = 'tEdit tInsert tDown tWedge tWave | tLeft tRight | +tCurve1 +tCurve2 tSync | tPlus tTimes tDiv | tCross | tDel tRowLeft tRowRight | tYellow tBlue | tPen | tHand glasses excel keypad | formula fx fxDel'

function svg(name){
    return `<svg viewBox="0 0 16 16">${icons[name]}</svg>`
}
function buttons(items){
    return items.split(' ').map(item => {
        if(item=='|') return '<i class="sep"></i>'
        if(item=='v') return '<button class="drop" aria-label="Mais"></button>'
        if(item=='combo') return '<div class="finder"><input type="text" aria-label="Caso de carga"><button class="combo_btn" aria-label="Abrir lista"></button></div>'
        let name = item.replace('+', '')
        return `<button class="icon${item==name ? '' : ' on'}" aria-label="${name}">${svg(name)}</button>`
    }).join('')
}
function bars(row){
    return row.map(items => `<div class="bar"><i class="grip"></i>${buttons(items)}</div>`).join('')
}
document.querySelector('#row1').innerHTML = bars(row1)
document.querySelector('#row2').innerHTML = bars(row2)
document.querySelector('#row3').innerHTML = buttons(row3)
document.querySelectorAll('[data-icon]').forEach(el => {
    el.innerHTML = svg(el.dataset.icon)
})
```
